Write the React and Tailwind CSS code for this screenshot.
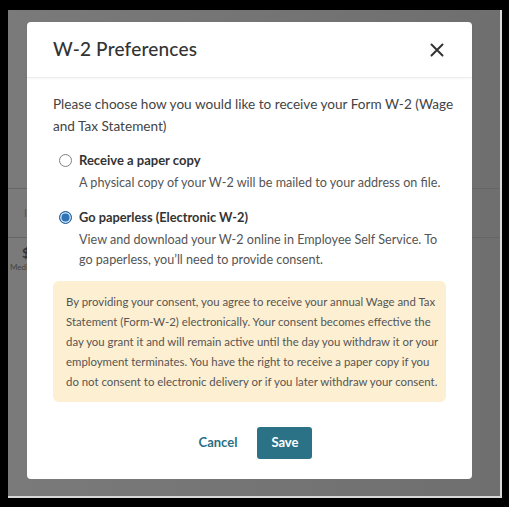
import React from "react";

export default function App() {
  return (
    <div className="w-[509px] h-[507px] bg-black pt-[10px] pl-[8px] pr-[7px] pb-[9px]" style={{ fontFamily: "Lato, 'Open Sans', sans-serif" }}>
      <div className="relative w-full h-full bg-gradient-to-r from-[#7a7a7a] to-[#6f6f6f] border-r-2 border-b-2 border-[#d9d9d9] overflow-hidden">
        {/* background page behind overlay */}
        <div className="flex flex-col">
          <div className="h-[178px]" />
          <div className="h-px bg-[#656565]" />
          <div className="h-[48px] flex items-center pl-[16px] text-[11px] text-[#555]">I</div>
          <div className="h-px bg-[#656565]" />
          <div className="pl-[14px] pt-[8px] text-[14px] font-bold text-[#333] leading-none">$</div>
          <div className="pl-[2px] pt-[3px] text-[8px] text-[#444] leading-none">Medic</div>
        </div>

        {/* modal */}
        <div className="absolute left-[19px] top-[12px] w-[445px] h-[457px] bg-white rounded-[4px] flex flex-col">
          <div className="shrink-0 h-[56px] flex items-center justify-between pl-[26px] pr-[28px] border-b border-[#ececec] shadow-[0_1px_3px_rgba(0,0,0,0.04)]">
            <div className="text-[19px] text-[#333] font-medium tracking-[0.2px]">W-2 Preferences</div>
            <svg width="14" height="14" viewBox="0 0 14 14" className="text-[#333]">
              <path d="M1.5 1.5 L12.5 12.5 M12.5 1.5 L1.5 12.5" stroke="currentColor" strokeWidth="2" strokeLinecap="round" />
            </svg>
          </div>
          <div className="px-[26px] pt-[15px]">
            <p className="mr-[-10px] text-[13.6px] leading-[22px] text-[#444]">
              Please choose how you would like to receive your Form W-2 (Wage and Tax Statement)
            </p>
            <div className="mt-[13px] flex flex-col gap-[14px]">
              <div className="flex pl-[6px] gap-[7px]">
                <div className="mt-[4px] w-[13px] h-[13px] rounded-full border border-[#808080] bg-white shrink-0" />
                <div>
                  <div className="text-[13px] font-bold text-[#333] leading-[20px]">Receive a paper copy</div>
                  <div className="text-[12.6px] text-[#555] leading-[20px] mt-[3px]">A physical copy of your W-2 will be mailed to your address on file.</div>
                </div>
              </div>
              <div className="flex pl-[6px] gap-[7px]">
                <div className="mt-[4px] w-[13px] h-[13px] rounded-full border border-[#1f5f9b] bg-[#2f74b5] shadow-[inset_0_0_0_1.5px_#cfe0f3] shrink-0" />
                <div>
                  <div className="text-[12.8px] font-bold text-[#333] leading-[20px]">Go paperless (Electronic W-2)</div>
                  <div className="text-[12.6px] text-[#555] leading-[19.5px] mt-[3px]">View and download your W-2 online in Employee Self Service. To go paperless, you’ll need to provide consent.</div>
                </div>
              </div>
            </div>
            <div className="mt-[12px] bg-[#fdefd1] rounded-[6px] pl-[13px] pr-[4px] pt-[11px] pb-[10px] text-[11.4px] leading-[20px] text-[#555]">
              By providing your consent, you agree to receive your annual Wage and Tax<br />
              Statement (Form-W-2) electronically. Your consent becomes effective the<br />
              day you grant it and will remain active until the day you withdraw it or your<br />
              employment terminates. You have the right to receive a paper copy if you<br />
              do not consent to electronic delivery or if you later withdraw your consent.
            </div>
            <div className="mt-[25px] flex justify-center items-center gap-[10px]">
              <button className="pl-[12px] pr-[10px] h-[32px] text-[13px] font-bold text-[#2b6f84]">Cancel</button>
              <button className="w-[55px] h-[32px] rounded-[3px] bg-[#2b7287] text-white text-[13px] font-bold">Save</button>
            </div>
          </div>
        </div>
      </div>
    </div>
  );
}
